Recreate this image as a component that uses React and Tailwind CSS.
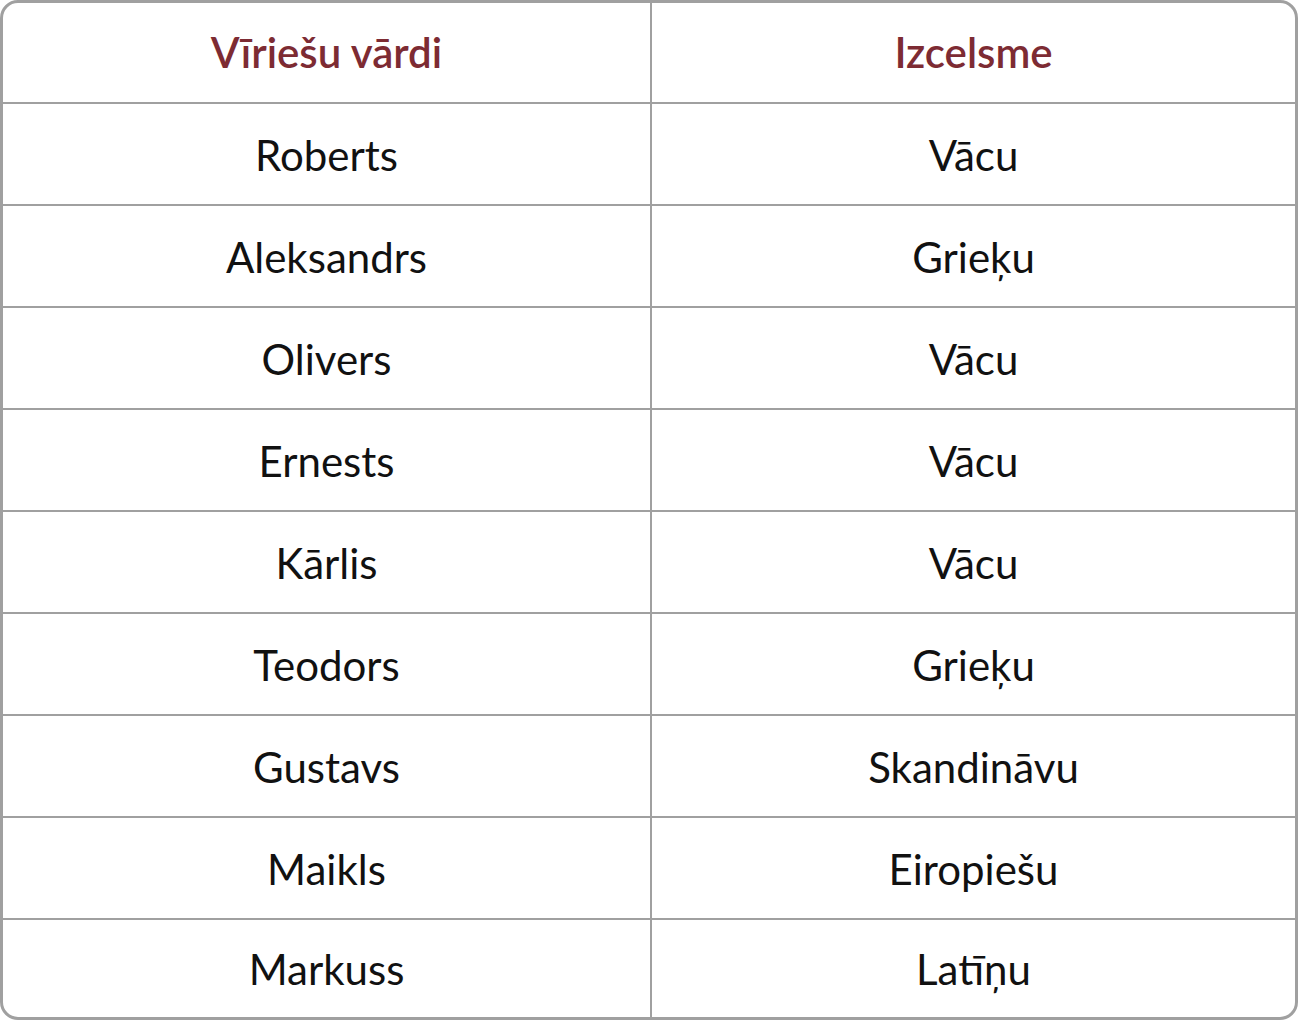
const ROWS = [
  ["Roberts", "Vācu"],
  ["Aleksandrs", "Grieķu"],
  ["Olivers", "Vācu"],
  ["Ernests", "Vācu"],
  ["Kārlis", "Vācu"],
  ["Teodors", "Grieķu"],
  ["Gustavs", "Skandināvu"],
  ["Maikls", "Eiropiešu"],
  ["Markuss", "Latīņu"],
];

export default function App() {
  return (
    <div className="w-[1298px] h-[1020px] bg-white" style={{ fontFamily: "Lato, 'Open Sans', sans-serif" }}>
      <div className="h-full border-[3px] border-[#a0a0a0] rounded-[18px] overflow-hidden flex flex-col">
        <div className="h-[101px] flex border-b-2 border-[#a0a0a0] text-[#7d2b33] text-[42px] font-semibold">
          <div className="w-[649px] border-r-2 border-[#a0a0a0] flex items-center justify-center">Vīriešu vārdi</div>
          <div className="flex-1 flex items-center justify-center">Izcelsme</div>
        </div>
        {ROWS.map(([name, origin], i) => (
          <div
            key={name}
            className={`flex text-[#111] text-[42px] ${i < ROWS.length - 1 ? "h-[102px] border-b-2 border-[#a0a0a0]" : "flex-1"}`}
          >
            <div className="w-[649px] border-r-2 border-[#a0a0a0] flex items-center justify-center pt-[2px]">{name}</div>
            <div className="flex-1 flex items-center justify-center pt-[2px]">{origin}</div>
          </div>
        ))}
      </div>
    </div>
  );
}
